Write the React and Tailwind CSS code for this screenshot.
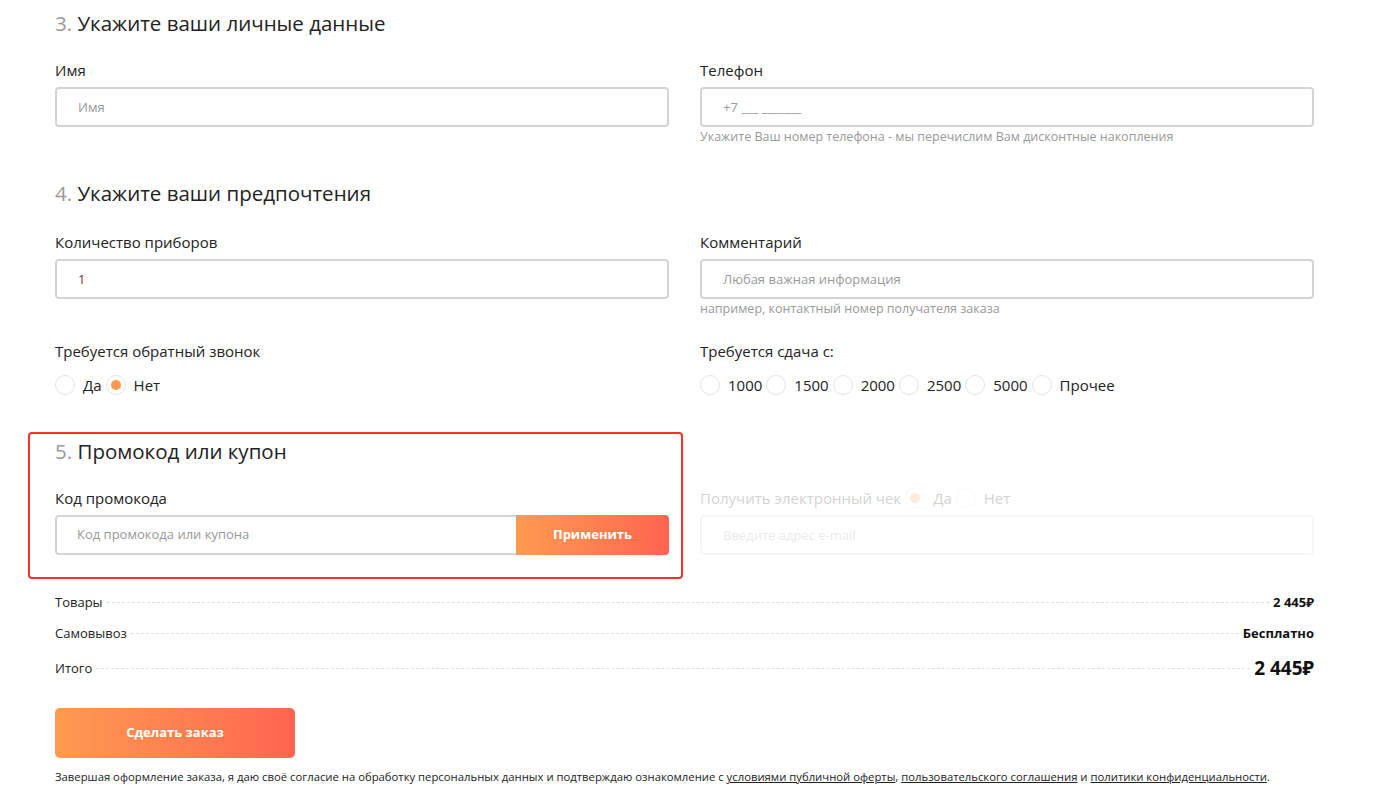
import React, { useState } from "react";

const Radio = ({ checked, label, onClick }) => (
  <label className="flex items-center cursor-pointer mr-1" onClick={onClick}>
    <span className="w-5 h-5 rounded-full border border-[#e3e3e3] bg-white flex items-center justify-center">
      {checked && <span className="w-[10px] h-[10px] rounded-full bg-[#ff9a50]" />}
    </span>
    <span className="ml-2 text-[15px] leading-5 text-[#222]">{label}</span>
  </label>
);

const Heading = ({ num, children }) => (
  <h2 className="text-[20.5px] leading-7 text-[#222]">
    <span className="text-[#999]">{num}.</span> {children}
  </h2>
);

const Field = ({ label, placeholder, value, hint }) => (
  <div>
    <div className="text-[15px] leading-5 text-[#222] mb-[7px]">{label}</div>
    <input
      defaultValue={value}
      placeholder={placeholder}
      className="w-full h-10 rounded-[4px] border-2 border-[#d4d4d4] px-[21px] text-[13px] text-[#7a1f45] placeholder:text-[#999] outline-none"
    />
    {hint && <div className="mt-[2px] text-[12.5px] leading-4 text-[#999]">{hint}</div>}
  </div>
);

const SummaryRow = ({ title, value, big }) => (
  <div className="flex items-center">
    <span className="text-[13px] leading-5 text-[#222]">{title}</span>
    <span className="flex-1 mx-1 border-t border-dashed border-[#e0e0e0]" />
    <span className={`font-bold text-[#111] ${big ? "text-[19px] leading-6" : "text-[13px] leading-5"}`}>
      {value}
    </span>
  </div>
);

const App = () => {
  const [callback, setCallback] = useState("no");
  const [change, setChange] = useState("");
  const sums = ["1000", "1500", "2000", "2500", "5000", "Прочее"];

  return (
    <div className="min-h-screen bg-white" style={{ fontFamily: '"Open Sans", "Noto Sans", sans-serif' }}>
      <div className="ml-[55px] w-[1259px] pt-[9px]">
        {/* 3 */}
        <Heading num="3">Укажите ваши личные данные</Heading>
        <div className="grid grid-cols-2 gap-x-[31px] mt-[23px]">
          <Field label="Имя" placeholder="Имя" />
          <Field
            label="Телефон"
            placeholder="+7 ___ _______"
            hint="Укажите Ваш номер телефона - мы перечислим Вам дисконтные накопления"
          />
        </div>

        {/* 4 */}
        <div className="mt-[34px]">
          <Heading num="4">Укажите ваши предпочтения</Heading>
        </div>
        <div className="grid grid-cols-2 gap-x-[31px] mt-[25px]">
          <Field label="Количество приборов" value="1" />
          <Field
            label="Комментарий"
            placeholder="Любая важная информация"
            hint="например, контактный номер получателя заказа"
          />
        </div>

        <div className="grid grid-cols-2 gap-x-[31px] mt-6">
          <div>
            <div className="text-[15px] leading-5 text-[#222]">Требуется обратный звонок</div>
            <div className="flex mt-[14px]">
              <Radio label="Да" checked={callback === "yes"} onClick={() => setCallback("yes")} />
              <Radio label="Нет" checked={callback === "no"} onClick={() => setCallback("no")} />
            </div>
          </div>
          <div>
            <div className="text-[15px] leading-5 text-[#222]">Требуется сдача с:</div>
            <div className="flex mt-[14px]">
              {sums.map((s) => (
                <Radio key={s} label={s} checked={change === s} onClick={() => setChange(s)} />
              ))}
            </div>
          </div>
        </div>

        {/* 5 */}
        <div className="grid grid-cols-2 gap-x-[31px] mt-[42px]">
          <div className="relative">
            <div className="absolute -left-[27px] -right-[14px] -top-[5px] -bottom-[24px] border-2 border-[#f5312b] rounded-[4px] pointer-events-none" />
            <Heading num="5">Промокод или купон</Heading>
            <div className="text-[15px] leading-5 text-[#222] mt-[23px] mb-[7px]">Код промокода</div>
            <div className="flex h-10">
              <input
                placeholder="Код промокода или купона"
                className="flex-1 min-w-0 rounded-l-[4px] border-2 border-r-0 border-[#d4d4d4] px-[20px] text-[13px] placeholder:text-[#999] outline-none"
              />
              <button className="w-[153px] rounded-r-[4px] bg-gradient-to-r from-[#ff9a50] to-[#ff6450] text-white text-[13px] font-bold">
                Применить
              </button>
            </div>
          </div>
          <div className="opacity-20 pt-[51px]">
            <div className="flex items-center mb-[7px]">
              <span className="text-[15px] leading-5 text-[#222] mr-1">Получить электронный чек</span>
              <Radio label="Да" checked />
              <Radio label="Нет" />
            </div>
            <input
              placeholder="Введите адрес e-mail"
              className="w-full h-10 rounded-[4px] border-2 border-[#d4d4d4] px-[21px] text-[13px] placeholder:text-[#999] outline-none"
            />
          </div>
        </div>

        {/* Summary */}
        <div className="mt-[37px] flex flex-col">
          <SummaryRow title="Товары" value="2 445₽" />
          <div className="mt-[11px]">
            <SummaryRow title="Самовывоз" value="Бесплатно" />
          </div>
          <div className="mt-[13px]">
            <SummaryRow title="Итого" value="2 445₽" big />
          </div>
        </div>

        <button className="mt-[28px] w-[240px] h-[50px] rounded-[5px] bg-gradient-to-r from-[#ff9a50] to-[#ff6450] text-white text-[13px] font-bold">
          Сделать заказ
        </button>

        <p className="mt-[11px] text-[11.3px] leading-4 text-[#222]">
          Завершая оформление заказа, я даю своё согласие на обработку персональных данных и подтверждаю ознакомление с{" "}
          <a href="#" className="underline">условиями публичной оферты</a>,{" "}
          <a href="#" className="underline">пользовательского соглашения</a> и{" "}
          <a href="#" className="underline">политики конфиденциальности</a>.
        </p>
      </div>
    </div>
  );
};

export default App;
